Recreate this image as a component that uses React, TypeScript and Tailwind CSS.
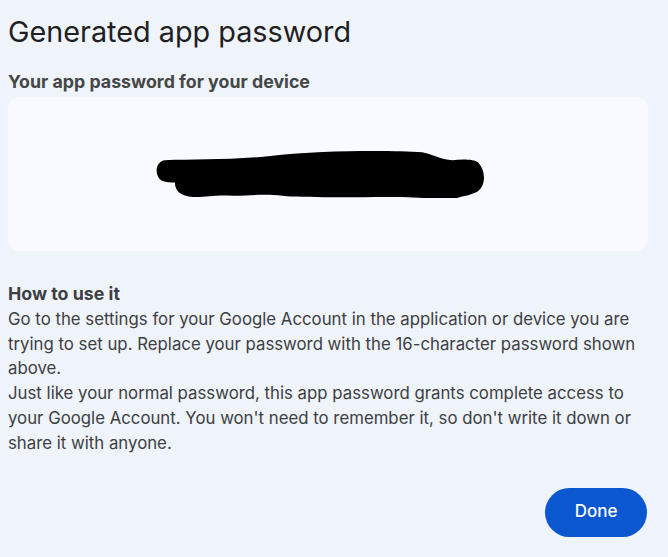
import React from "react";

export default function App() {
  return (
    <div className="min-h-[557px] w-[668px] bg-[#eff3fa] font-['Inter',sans-serif] text-[#1f1f1f]">
      <div className="px-2 pt-[13px]">
        <h1 className="text-[28.8px] leading-[38px] font-normal text-[#1f1f1f]">Generated app password</h1>
        <div className="mt-[21px] text-[17.8px] leading-[20px] font-bold text-[#444746]">Your app password for your device</div>
        <div className="mt-[5px] flex h-[154px] w-[640px] items-center justify-center rounded-[12px] bg-[#f8faff]">
          <svg width="333" height="49" viewBox="0 0 334 44" preserveAspectRatio="none" className="ml-[-18px] mt-[-1px]">
            <path
              d="M12 10 C 40 9, 80 10, 120 6 C 170 1, 240 1, 270 3 C 285 6, 290 10, 300 10 C 310 9, 322 9, 326 12 C 334 20, 334 32, 326 38 C 318 42, 312 42, 305 44 C 290 45, 270 44, 250 43 C 200 43, 150 44, 130 42 C 110 40, 100 42, 80 42 C 60 41, 50 44, 40 43 C 28 42, 22 38, 22 30 C 18 30, 12 30, 8 28 C 0 22, 4 10, 12 10 Z"
              fill="#000"
            />
          </svg>
        </div>
        <div className="mt-[31px] w-[640px] text-[16.8px] leading-[24.8px] text-[#3c4043]">
          <div className="text-[17.8px] font-bold text-[#3c4043]">How to use it</div>
          <p>
            Go to the settings for your Google Account in the application or device you are trying to set up. Replace your password with the 16-character password shown above.
          </p>
          <p>
            Just like your normal password, this app password grants complete access to your Google Account. You won't need to remember it, so don't write it down or share it with anyone.
          </p>
        </div>
        <div className="mt-[32px] flex w-[640px] justify-end">
          <button className="mr-[1px] h-[49px] w-[102px] rounded-full bg-[#0b57d0] text-[17px] font-medium text-white">Done</button>
        </div>
      </div>
    </div>
  );
}
